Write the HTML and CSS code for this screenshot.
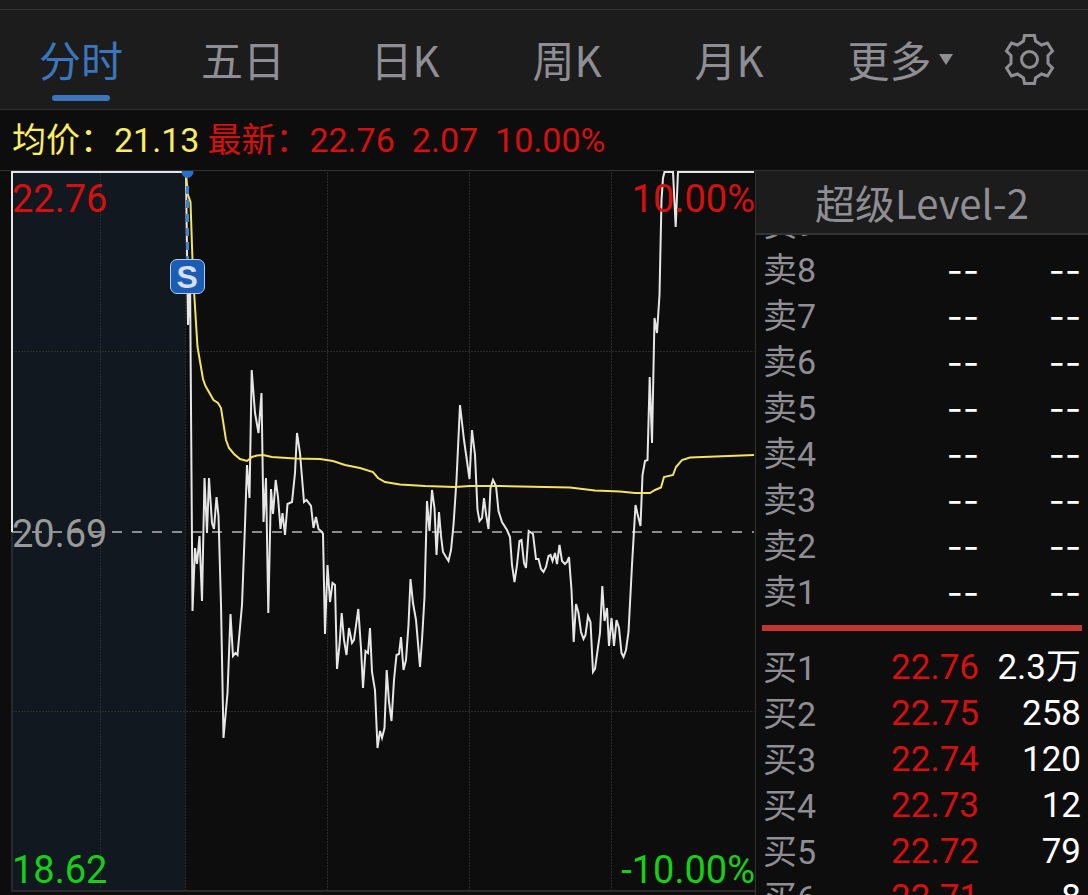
FILE: index.html
```html
<!DOCTYPE html>
<html lang="zh-CN">
<head>
    <meta charset="UTF-8">
    <meta name="viewport" content="width=device-width, initial-scale=1.0">
    <title>分时</title>
    <link rel="stylesheet" href="styles.css">
</head>
<body>
    <nav class="tabs">
        <button class="tab active">分时</button>
        <button class="tab">五日</button>
        <button class="tab">日K</button>
        <button class="tab">周K</button>
        <button class="tab">月K</button>
        <button class="tab more">更多<span class="arrow"></span></button>
        <button class="settings" aria-label="设置">
            <svg width="51" height="53" viewBox="0 0 51 53" fill="none" stroke="#8f8e94" stroke-width="3">
                <path d="M20.500 2.500H30.500L31.500 8L37.500 12L43.500 10L48.500 18L44 22.500V30.500L48.500 35L43.500 43L37.500 41L31.500 45L30.500 50.500H20.500L19.500 45L13.500 41L7.500 43L2.500 35L7 30.500V22.500L2.500 18L7.500 10L13.500 12L19.500 8Z"/>
                <circle cx="25.500" cy="26.500" r="8"/>
            </svg>
        </button>
    </nav>

    <div class="quote">
        <span class="average">均价：21.13</span>
        <span class="latest">最新：22.76</span>
        <span class="change">2.07</span>
        <span class="change">10.00%</span>
    </div>

    <main class="main">
        <section class="chart">
            <div class="plot">
                <svg class="lines" viewBox="11 171 744 721" preserveAspectRatio="none">
                    <rect class="auction" x="12" y="171" width="173" height="721"/>
                    <path class="frame" d="M12 171V891H755"/>
                    <path class="grid" d="M100.500 172V891M185.500 172V891M327.500 172V891M469.500 172V891M611.500 172V891M12 351.500H754M12 711.500H754"/>
                    <path class="base" d="M12 532H754"/>
                    <polyline class="price" points="12,532 12,172 186,172 188,325 190,270 192.500,611 195,548 197,564 199.500,536 202,601 204.500,478 207,533 209,478 212,523 214,529 216.500,497 218.500,516 221,605 223.500,738 227.500,693 230.500,614 233,656 235.500,653 237.500,655 242,605 245,525 247,465 249.500,498 251.700,370 255,413 258.500,433 261.500,393 263.500,522 266,478 268.300,613 271,489 273,514 275.700,480 278,497 280.500,529 282.500,513 285,535 287.500,504 292,502 295,473 297,433 300,453 304,502 306.500,500 311,506 313.500,528 316,517 318.500,529 322,532 323,534 325,634 327.500,565 330,602 332.500,583 335,585 337,669 339.500,645 341.700,613 344,640 346.500,655 349,628 352,643 354,640 358.300,609 361,648 363,688 365.500,651 368,653 370,628 372,672 375,690 377.500,748 380,731 382,738 384.500,728 386.700,670 389,702 391.500,721 394,680 396.500,655 399,654 401,637 403.500,670 406,660 408.500,625 410.500,579 413,603 416,620 420,667 422,640 424.500,597 427,501 429.500,531 432,490 434.500,508 436.500,555 439,512 441,536 443,552 446,557 448.500,561 451,550 453.500,525 456.500,480 460,405 464,440 469.500,479 472,430 475,455 477.500,510 479.500,521 482,518 484,498 486,514 488.500,529 490.500,488 493,480 496,486 498.500,511 502,522 507,530 510,537 512,565 514.500,582 517,565 519.500,541 521.500,540 524,563 526,568 528.700,531 533,534 536,559 538.500,559 541,569 543.500,572 546,567 548.500,556 550.500,555 552.500,561 555,553 557,564 559.500,545 562,561 565,564 567,562 569,557 571.500,590 573.700,642 576,604 578.500,613 581,632 583.500,639 585.500,635 588,616 590.500,622 593,672 595,669 600,633 602.300,586 604.500,621 607,608 609,646 611.500,618 614,646 616.500,620 619,628 621.500,653 623.500,657 626,650 628.500,632 632,565 635.500,505 638,516 640.500,526 642.500,475 645,461 647.500,460 649.700,377 652,443 654.500,318 657,333 659.500,295 661.500,200 663,178 664.500,172 673,172 675.700,227 678,172 754,172"/>
                    <polyline class="mean" points="186,174 188,195 190.500,202 193,275 197.500,347 203,379 205.500,386 213.500,400 218,403 221,408 226,440 229,448 234,454 240,459 247,461 252,457 257,455.500 263,455 272,457 295,458.500 320,459 333,461 345,465 360,468 373,472 378,478 385,482 400,484.500 425,486 455,487 470,486 500,486 570,487.500 595,490.500 620,491.500 635,493 650,493 655,490 661,487.500 664,477 673,475 676,467 682,460 690,457.500 754,455"/>
                    <path class="sell-line" d="M187.500 186V259"/>
                    <path class="sell-dot" d="M181.500 171a6 7 0 0 0 12 0Z"/>
                </svg>
                <span class="sell-mark">S</span>
                <span class="axis top left up">22.76</span>
                <span class="axis top right up">10.00%</span>
                <span class="axis middle left">20.69</span>
                <span class="axis bottom left down">18.62</span>
                <span class="axis bottom right down">-10.00%</span>
            </div>
        </section>

        <aside class="book">
            <button class="level">超级Level-2</button>
            <div class="asks">
                <table>
                    <tr><th scope="row">卖9</th><td>--</td><td>--</td></tr>
                    <tr><th scope="row">卖8</th><td>--</td><td>--</td></tr>
                    <tr><th scope="row">卖7</th><td>--</td><td>--</td></tr>
                    <tr><th scope="row">卖6</th><td>--</td><td>--</td></tr>
                    <tr><th scope="row">卖5</th><td>--</td><td>--</td></tr>
                    <tr><th scope="row">卖4</th><td>--</td><td>--</td></tr>
                    <tr><th scope="row">卖3</th><td>--</td><td>--</td></tr>
                    <tr><th scope="row">卖2</th><td>--</td><td>--</td></tr>
                    <tr><th scope="row">卖1</th><td>--</td><td>--</td></tr>
                </table>
            </div>
            <div class="divider"></div>
            <div class="bids">
                <table>
                    <tr><th scope="row">买1</th><td class="up">22.76</td><td>2.3万</td></tr>
                    <tr><th scope="row">买2</th><td class="up">22.75</td><td>258</td></tr>
                    <tr><th scope="row">买3</th><td class="up">22.74</td><td>120</td></tr>
                    <tr><th scope="row">买4</th><td class="up">22.73</td><td>12</td></tr>
                    <tr><th scope="row">买5</th><td class="up">22.72</td><td>79</td></tr>
                    <tr><th scope="row">买6</th><td class="up">22.71</td><td>8</td></tr>
                </table>
            </div>
        </aside>
    </main>
</body>
</html>
```
FILE: styles.css
```css
* { box-sizing: border-box; }

body {
    margin: 0;
    height: 100vh;
    display: flex;
    flex-direction: column;
    overflow: hidden;
    background-color: #0d0d0d;
    color: #fff;
    font-family: Roboto, "Noto Sans CJK SC", sans-serif;
}

button {
    border: none;
    padding: 0;
    background: none;
    color: #8f8e94;
    font-family: "Noto Sans CJK SC", sans-serif;
    cursor: pointer;
}

/* period tabs */
.tabs {
    display: flex;
    flex: none;
    height: 110px;
    padding-right: 20px;
    background-color: #1c1c1c;
    border-top: 9px solid #1c1c1c;
    border-bottom: 1px solid #333;
    box-shadow: inset 0 1px #333;
}

.tab {
    position: relative;
    flex: 1;
    font-size: 42px;
    line-height: 60px;
}

.tab.active { color: #3a76bd; }

.tab.active::after {
    content: "";
    position: absolute;
    bottom: 8px;
    left: 50%;
    width: 58px;
    height: 6px;
    margin-left: -29px;
    border-radius: 3px;
    background-color: #3a76bd;
}

.more {
    display: flex;
    flex: none;
    align-items: center;
    justify-content: center;
    gap: 7px;
    width: 180px;
}

.arrow {
    border: 7px solid transparent;
    border-top: 11px solid #8f8e94;
    border-bottom: none;
}

.settings {
    display: flex;
    align-items: center;
    justify-content: center;
    width: 78px;
}

/* quote line */
.quote {
    display: flex;
    flex: none;
    align-items: center;
    gap: 17px;
    height: 61px;
    padding-left: 12px;
    border-bottom: 1px solid #333;
    font-size: 34px;
    line-height: 60px;
    color: #d60f0f;
}

.average {
    margin-right: -9px;
    color: #fbec62;
}

.up { color: #d60f0f; }
.down { color: #16d016; }

.main {
    display: flex;
    flex: 1;
    min-height: 0;
}

/* chart */
.chart {
    flex: 1;
    padding: 0 0 3px 11px;
}

.plot {
    position: relative;
    height: 100%;
}

.lines {
    display: block;
    width: 100%;
    height: 100%;
}

.lines path, .lines polyline {
    fill: none;
    vector-effect: non-scaling-stroke;
}

.auction { fill: #11181f; }
.frame { stroke: #2a2a2c; stroke-width: 2; }
.grid { stroke: #2c2c2f; stroke-width: 1; stroke-dasharray: 2 1; }
.base { stroke: #8c8c8c; stroke-width: 2; stroke-dasharray: 10 10; }
.price { stroke: #e6e6e6; stroke-width: 2; }
.mean { stroke: #f3e45c; stroke-width: 2; }
.sell-line { stroke: #3f83d6; stroke-width: 3; stroke-dasharray: 8 6; }
.lines .sell-dot { fill: #2a6fd0; }

.sell-mark {
    position: absolute;
    top: 88px;
    left: 24%;
    width: 35px;
    height: 35px;
    margin-left: -20px;
    border: 1px solid #b7cbe6;
    border-radius: 7px;
    background-color: #1b5cb5;
    color: #d5dfed;
    font: bold 32px/34px "Liberation Sans", sans-serif;
    text-align: center;
}

.axis {
    position: absolute;
    font-size: 38px;
    line-height: 44px;
}

.axis.top { top: 6px; }
.axis.middle { top: 50%; margin-top: -20px; color: #999; }
.axis.bottom { bottom: 0; }
.axis.left { left: 1px; }
.axis.right { right: 0; }

/* order book */
.book {
    display: flex;
    flex-direction: column;
    width: 333px;
    border-left: 1px solid #333;
}

.level {
    flex: none;
    height: 64px;
    border-bottom: 2px solid #333;
    background-color: #1c1c1c;
    font-size: 40px;
    line-height: 60px;
}

.asks {
    display: flex;
    flex: none;
    flex-direction: column;
    justify-content: flex-end;
    height: 380px;
    overflow: hidden;
}

.asks td { font-family: Inter, sans-serif; }

.divider {
    flex: none;
    height: 6px;
    margin: 10px 6px 14px;
    background-color: #c23531;
}

.bids {
    flex: 1;
    overflow: hidden;
}

table {
    width: 100%;
    border-collapse: collapse;
    table-layout: fixed;
    font-size: 35px;
    line-height: 46px;
}

th, td {
    height: 46px;
    padding: 0;
    font-weight: normal;
    text-align: right;
    vertical-align: top;
    white-space: nowrap;
}

th {
    width: 110px;
    padding-left: 7px;
    color: #8f8e94;
    font-size: 34px;
    text-align: left;
}

td:last-child {
    width: 109px;
    padding-right: 7px;
}
```
